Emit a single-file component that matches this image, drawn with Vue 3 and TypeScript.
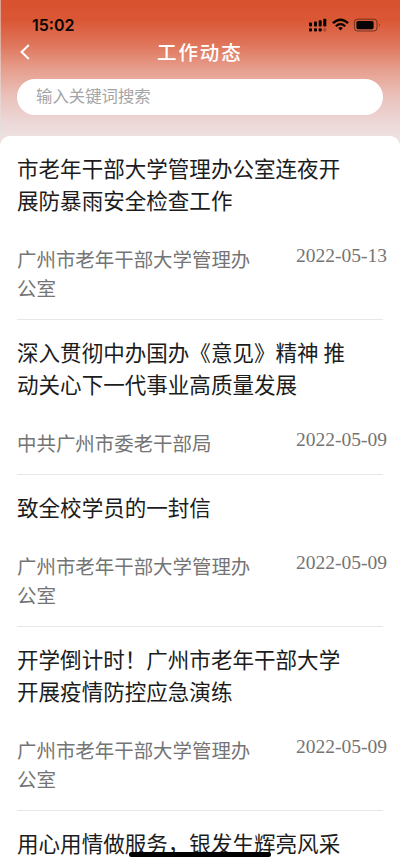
<script setup lang="ts">
interface NewsItem {
  title: string
  source: string
  date: string
}

const items: NewsItem[] = [
  { title: '市老年干部大学管理办公室连夜开展防暴雨安全检查工作', source: '广州市老年干部大学管理办公室', date: '2022-05-13' },
  { title: '深入贯彻中办国办《意见》精神 推动关心下一代事业高质量发展', source: '中共广州市委老干部局', date: '2022-05-09' },
  { title: '致全校学员的一封信', source: '广州市老年干部大学管理办公室', date: '2022-05-09' },
  { title: '开学倒计时！广州市老年干部大学开展疫情防控应急演练', source: '广州市老年干部大学管理办公室', date: '2022-05-09' },
  { title: '用心用情做服务，银发生辉亮风采', source: '', date: '' },
]
</script>

<template>
  <div class="screen">
    <header class="header">
      <div class="status">
        <span class="time">15:02</span>
        <svg class="signals" width="74" height="16" viewBox="0 0 74 16">
          <g fill="#090504">
            <rect x="1" y="5.6" width="3" height="4" rx="0.8" />
            <rect x="6" y="4.6" width="3" height="5" rx="0.8" />
            <rect x="10.7" y="3.2" width="3" height="6.4" rx="0.8" />
            <rect x="15.3" y="1.7" width="3" height="7.9" rx="0.8" />
            <rect x="1" y="11.3" width="3" height="3.2" rx="1" />
            <rect x="6" y="11.3" width="3" height="3.2" rx="1" />
            <rect x="10.7" y="11.3" width="3" height="3.2" rx="1" />
            <rect x="15.3" y="11.3" width="3" height="3.2" rx="1" opacity="0.25" />
            <path d="M30.2 10.9Q32.5 9.2 34.8 10.9L32.5 13.6Z" />
            <rect x="48.4" y="4" width="17.2" height="8.2" rx="1.6" />
            <path d="M71.1 6.5Q72.6 8.1 71.1 9.7Z" opacity="0.6" />
          </g>
          <g fill="none" stroke="#090504">
            <path d="M24.9 6.2Q32.5 -0.9 40.1 6.2" stroke-width="2.4" />
            <path d="M27.8 9.2Q32.5 4.9 37.2 9.2" stroke-width="2.2" />
            <rect x="46.4" y="2.2" width="22.6" height="11.8" rx="3" stroke-width="1" opacity="0.5" />
          </g>
        </svg>
      </div>
      <nav class="nav">
        <svg class="back" width="12" height="18" viewBox="0 0 12 18">
          <path d="M9.8 2L2.6 9L9.8 16" fill="none" stroke="#fff" stroke-width="2" />
        </svg>
        <h1>工作动态</h1>
      </nav>
      <div class="search">输入关键词搜索</div>
    </header>
    <main class="list">
      <article v-for="item in items" :key="item.title" class="item">
        <h2>{{ item.title }}</h2>
        <div v-if="item.source" class="meta">
          <span class="source">{{ item.source }}</span>
          <time>{{ item.date }}</time>
        </div>
      </article>
    </main>
    <div class="home-bar"></div>
  </div>
</template>

<style>
body {
  margin: 0;
}
</style>

<style scoped>
.screen {
  position: relative;
  display: flex;
  flex-direction: column;
  box-sizing: border-box;
  width: 400px;
  height: 865px;
  overflow: hidden;
  background: linear-gradient(#d9512f 0, #da5735 20px, #df765b 45px, #e69c8b 68px, #eac0b9 95px, #ecd5d5 120px, #eee2e1 138px, #eee2e1 150px);
  font-family: "Noto Sans CJK SC", sans-serif;
}
.header {
  flex: none;
  height: 136px;
  box-shadow: inset 1px 0 rgba(225, 225, 225, 0.55);
}
.status {
  display: flex;
  align-items: center;
  justify-content: space-between;
  height: 34px;
  padding: 16px 18px 0 32px;
  box-sizing: border-box;
}
.time {
  font: 600 16px/20px Inter, sans-serif;
  color: #090504;
}
.nav {
  display: flex;
  align-items: center;
  height: 36px;
  padding-left: 19px;
}
.nav h1 {
  margin: 0 0 0 126px;
  font-size: 19.5px;
  font-weight: 500;
  line-height: 36px;
  letter-spacing: 1.9px;
  color: #fff;
}
.search {
  box-sizing: border-box;
  height: 36px;
  margin: 9px 17px 0;
  padding-left: 19px;
  border-radius: 18px;
  background: #fff;
  font-size: 16.4px;
  line-height: 33px;
  color: #a5a5a5;
}
.list {
  flex: 1;
  padding: 0 17px;
  border-radius: 10px 10px 0 0;
  background: #fff;
}
.item {
  padding: 16px 0 17px;
  border-bottom: 1px solid #e8e8e8;
}
.item h2 {
  width: 330px;
  margin: 0;
  font-size: 21.55px;
  font-weight: 400;
  line-height: 32px;
  color: #1c1c1c;
}
.meta {
  display: flex;
  justify-content: space-between;
  margin: 28px -4px 0 0;
}
.source {
  width: 240px;
  font-size: 19.45px;
  line-height: 29px;
  color: #747474;
}
.meta time {
  padding-top: 1px;
  font: 19.5px/22px "Liberation Serif", serif;
  color: #747474;
}
.home-bar {
  position: absolute;
  left: 129px;
  top: 852px;
  width: 142px;
  height: 5px;
  border-radius: 3px;
  background: #000;
}
</style>
